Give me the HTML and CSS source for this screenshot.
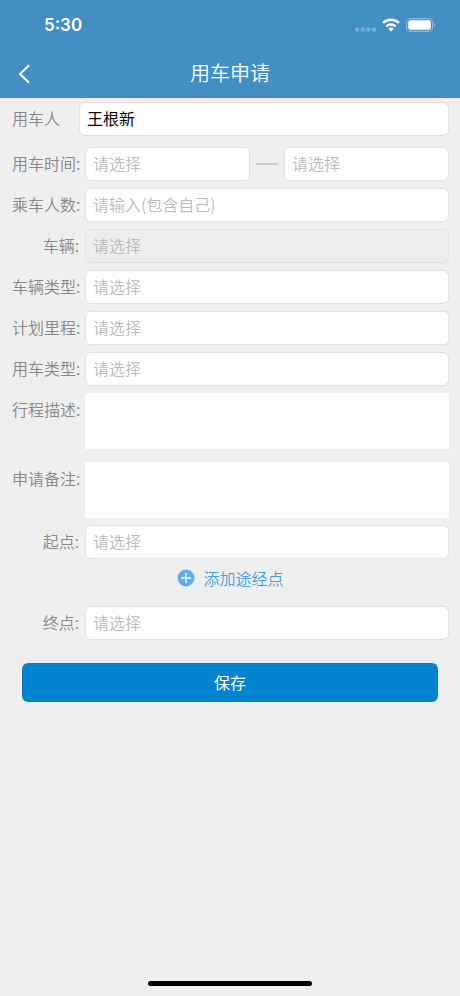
FILE: index.html
```html
<!DOCTYPE html>
<html lang="zh-CN">
<head>
  <meta charset="UTF-8" />
  <meta name="viewport" content="width=device-width, initial-scale=1.0"/>
  <title>用车申请</title>
  <link rel="stylesheet" href="styles.css">
</head>
<body>
  <header class="cabecera">
    <div class="estado">
      <span class="hora">5:30</span>
      <div class="iconos">
        <svg class="senal" width="22" height="14" viewBox="0 0 22 14" fill="#74afdd">
          <rect x="1" y="9.6" width="4" height="4" rx="1.4"/>
          <rect x="6.8" y="9.6" width="4" height="4" rx="1.4"/>
          <rect x="12.4" y="9.6" width="4" height="4" rx="1.4"/>
          <rect x="18" y="9.6" width="4" height="4" rx="1.4"/>
        </svg>
        <svg class="wifi" width="18" height="14" viewBox="0 0 18 14" fill="none" stroke="#fff" stroke-width="2.5">
          <path d="M1 4.9a11.6 11.6 0 0 1 16 0"/>
          <path d="M4.2 8.3a7 7 0 0 1 9.6 0"/>
          <path d="M9 13.4L6.3 10.7a3.9 3.9 0 0 1 5.4 0z" fill="#fff" stroke="none"/>
        </svg>
        <svg class="bateria" width="30" height="14" viewBox="0 0 30 14">
          <rect x="0.6" y="0.6" width="26" height="12.8" rx="4" fill="none" stroke="#8abce1" stroke-width="1.1"/>
          <rect x="2.2" y="2.2" width="22.8" height="9.6" rx="2.4" fill="#fff"/>
          <path d="M28 4.8v4.4c1.8-.7 1.8-3.7 0-4.4z" fill="#8abce1"/>
        </svg>
      </div>
    </div>
    <div class="barra">
      <button class="volver" type="button" aria-label="返回">
        <svg width="12" height="20" viewBox="0 0 12 20" fill="none" stroke="#fff" stroke-width="2">
          <path d="M11 1.2L2 10l9 8.8"/>
        </svg>
      </button>
      <h1>用车申请</h1>
    </div>
  </header>

  <form class="formulario">
    <div class="fila usuario">
      <label for="usuario">用车人</label>
      <input type="text" id="usuario" value="王根新">
    </div>

    <div class="fila">
      <label for="inicio">用车时间:</label>
      <div class="rango">
        <input type="text" id="inicio" placeholder="请选择">
        <span class="guion"></span>
        <input type="text" id="fin" placeholder="请选择" aria-label="结束时间">
      </div>
    </div>

    <div class="fila">
      <label for="personas">乘车人数:</label>
      <input type="text" id="personas" placeholder="请输入(包含自己)">
    </div>

    <div class="fila">
      <label for="vehiculo">车辆:</label>
      <input type="text" id="vehiculo" placeholder="请选择" disabled>
    </div>

    <div class="fila">
      <label for="tipoVehiculo">车辆类型:</label>
      <input type="text" id="tipoVehiculo" placeholder="请选择">
    </div>

    <div class="fila">
      <label for="kilometros">计划里程:</label>
      <input type="text" id="kilometros" placeholder="请选择">
    </div>

    <div class="fila">
      <label for="tipoUso">用车类型:</label>
      <input type="text" id="tipoUso" placeholder="请选择">
    </div>

    <div class="fila texto">
      <label for="descripcion">行程描述:</label>
      <textarea id="descripcion"></textarea>
    </div>

    <div class="fila texto">
      <label for="notas">申请备注:</label>
      <textarea id="notas"></textarea>
    </div>

    <div class="fila">
      <label for="origen">起点:</label>
      <input type="text" id="origen" placeholder="请选择">
    </div>

    <button class="agregar" type="button">
      <svg width="18" height="18" viewBox="0 0 18 18">
        <circle cx="9" cy="9" r="8.5" fill="#5eaeee"/>
        <path d="M9 4v10M4 9h10" stroke="#fff" stroke-width="1.4"/>
      </svg>
      添加途经点
    </button>

    <div class="fila">
      <label for="destino">终点:</label>
      <input type="text" id="destino" placeholder="请选择">
    </div>

    <button class="guardar" type="button">保存</button>
  </form>

  <div class="inicio-barra"></div>
</body>
</html>
```
FILE: styles.css
```css
* {
  box-sizing: border-box;
}

body {
  display: flex;
  flex-direction: column;
  min-height: 100vh;
  margin: 0;
  background-color: #efefef;
  font-family: "Noto Sans CJK SC", sans-serif;
  font-size: 16px;
  font-weight: 350;
}

button,
input,
textarea {
  font: inherit;
}

.cabecera {
  background-color: #438fc3;
  color: white;
}

.estado {
  display: flex;
  align-items: center;
  justify-content: space-between;
  height: 50px;
  padding: 0 24px 0 44px;
}

.hora {
  font-family: Inter, sans-serif;
  font-size: 17px;
  font-weight: 600;
}

.iconos {
  display: flex;
  align-items: center;
  gap: 6px;
}

.barra {
  display: grid;
  grid-template-columns: 48px 1fr 48px;
  align-items: center;
  height: 48px;
}

.volver {
  display: flex;
  justify-content: center;
  padding: 0;
  border: none;
  background: none;
  cursor: pointer;
}

h1 {
  margin: 0;
  padding-bottom: 2px;
  font-size: 20px;
  font-weight: 350;
  line-height: 30px;
  text-align: center;
}

.formulario {
  display: flex;
  flex-direction: column;
  gap: 7px;
  padding: 4px 11px 0 12px;
}

.fila {
  display: grid;
  grid-template-columns: 67px 1fr;
  gap: 6px;
}

.fila label {
  color: #888;
  line-height: 32px;
  text-align: right;
  white-space: nowrap;
}

.usuario {
  gap: 0;
  margin-bottom: 4px;
}

.usuario label {
  text-align: left;
}

.fila input {
  width: 100%;
  min-width: 0;
  height: 34px;
  padding: 0 7px 2px;
  border: 1px solid #e2e2e2;
  border-radius: 6px;
  background-color: white;
  color: black;
}

.usuario input {
  font-weight: 400;
}

.fila input:disabled {
  background-color: #eee;
}

.fila input::placeholder {
  color: #bbb;
}

.rango {
  display: grid;
  grid-template-columns: 1fr 22px 1fr;
  align-items: center;
  gap: 6px;
}

.guion {
  height: 2px;
  background-color: #ccc;
}

.fila textarea {
  width: 100%;
  height: 56px;
  padding: 8px;
  border: none;
  background-color: white;
  resize: none;
}

.texto + .texto {
  margin: 6px 0 0;
}

.agregar {
  display: flex;
  align-items: center;
  justify-content: center;
  gap: 8px;
  height: 24px;
  margin-bottom: 9px;
  padding: 0;
  border: none;
  background: none;
  color: #3f9fe5;
  cursor: pointer;
}

.guardar {
  height: 39px;
  margin: 16px 11px 0 10px;
  padding: 0 0 2px;
  border: none;
  border-radius: 6px;
  background-color: #0084d0;
  color: white;
  font-weight: 400;
  cursor: pointer;
}

.inicio-barra {
  width: 164px;
  height: 5px;
  margin: auto auto 10px;
  border-radius: 3px;
  background-color: black;
}
```
